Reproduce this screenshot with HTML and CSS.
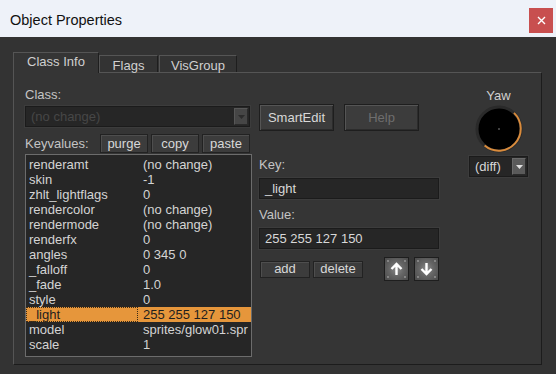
FILE: index.html
```html
<!DOCTYPE html>
<html lang="en">
<head>
    <meta charset="UTF-8">
    <title>Object Properties</title>
    <link rel="stylesheet" href="styles.css">
</head>
<body>
    <div class="titlebar">
        <span class="title">Object Properties</span>
        <button class="close">
            <svg width="9" height="9" viewBox="0 0 9 9"><path d="M1 1 L8 8 M8 1 L1 8" stroke="#fff" stroke-width="1.4"/></svg>
        </button>
    </div>

    <div class="client">
        <div class="tabs">
            <div class="tab active tab-class">Class Info</div>
            <div class="tab tab-flags">Flags</div>
            <div class="tab tab-vis">VisGroup</div>
        </div>

        <div class="panel">
            <!-- left: class + keyvalue list -->
            <div class="col-left">
                <div class="label first">Class:</div>
                <div class="combo combo-class">
                    <span class="combo-text">(no change)</span>
                    <span class="combo-btn">
                        <svg width="7" height="4" viewBox="0 0 7 4"><path d="M0 0 H7 L3.5 4 Z" fill="#2c2c2c"/></svg>
                    </span>
                </div>
                <div class="kv-bar">
                    <span class="label">Keyvalues:</span>
                    <button class="btn small">purge</button>
                    <button class="btn small">copy</button>
                    <button class="btn small">paste</button>
                </div>
                <div class="kv-list">
                    <div class="kv-row"><span class="k">renderamt</span><span class="v">(no change)</span></div>
                    <div class="kv-row"><span class="k">skin</span><span class="v">-1</span></div>
                    <div class="kv-row"><span class="k">zhlt_lightflags</span><span class="v">0</span></div>
                    <div class="kv-row"><span class="k">rendercolor</span><span class="v">(no change)</span></div>
                    <div class="kv-row"><span class="k">rendermode</span><span class="v">(no change)</span></div>
                    <div class="kv-row"><span class="k">renderfx</span><span class="v">0</span></div>
                    <div class="kv-row"><span class="k">angles</span><span class="v">0 345 0</span></div>
                    <div class="kv-row"><span class="k">_falloff</span><span class="v">0</span></div>
                    <div class="kv-row"><span class="k">_fade</span><span class="v">1.0</span></div>
                    <div class="kv-row"><span class="k">style</span><span class="v">0</span></div>
                    <div class="kv-row selected"><span class="k">_light</span><span class="v">255 255 127 150</span></div>
                    <div class="kv-row"><span class="k">model</span><span class="v">sprites/glow01.spr</span></div>
                    <div class="kv-row"><span class="k">scale</span><span class="v">1</span></div>
                </div>
            </div>

            <!-- middle: smartedit + key/value editing -->
            <div class="col-mid">
                <div class="top-buttons">
                    <button class="btn big">SmartEdit</button>
                    <button class="btn big" disabled>Help</button>
                </div>
                <div class="label key-label">Key:</div>
                <div class="field">_light</div>
                <div class="label value-label">Value:</div>
                <div class="field">255 255 127 150</div>
                <div class="edit-bar">
                    <button class="btn small wide">add</button>
                    <button class="btn small wide">delete</button>
                    <span class="spacer"></span>
                    <button class="arrow-btn">
                        <svg width="23" height="22" viewBox="0 0 23 22">
                            <circle cx="3" cy="3" r="0.9" fill="#9a9a9a"/><circle cx="20" cy="3" r="0.9" fill="#9a9a9a"/>
                            <circle cx="3" cy="19" r="0.9" fill="#9a9a9a"/><circle cx="20" cy="19" r="0.9" fill="#9a9a9a"/>
                            <path d="M11.5 17 V6 M6.5 11 L11.5 6 L16.5 11" fill="none" stroke="#fff" stroke-width="2.4"/>
                        </svg>
                    </button>
                    <button class="arrow-btn">
                        <svg width="23" height="22" viewBox="0 0 23 22">
                            <circle cx="3" cy="3" r="0.9" fill="#9a9a9a"/><circle cx="20" cy="3" r="0.9" fill="#9a9a9a"/>
                            <circle cx="3" cy="19" r="0.9" fill="#9a9a9a"/><circle cx="20" cy="19" r="0.9" fill="#9a9a9a"/>
                            <path d="M11.5 5 V16 M6.5 11 L11.5 16 L16.5 11" fill="none" stroke="#fff" stroke-width="2.4"/>
                        </svg>
                    </button>
                </div>
            </div>

            <!-- right: yaw dial -->
            <div class="col-right">
                <div class="label yaw-label">Yaw</div>
                <svg class="dial" width="48" height="48" viewBox="0 0 48 48">
                    <circle cx="24" cy="24" r="22" fill="#000" stroke="#2a2a2a" stroke-width="3"/>
                    <path d="M39 7.9 A22 22 0 0 1 9.6 40.6" fill="none" stroke="#d98b3c" stroke-width="2"/>
                    <rect x="23.5" y="23.5" width="1" height="1" fill="#fff"/>
                </svg>
                <div class="combo combo-diff">
                    <span class="combo-text">(diff)</span>
                    <span class="combo-btn">
                        <svg width="7" height="4" viewBox="0 0 7 4"><path d="M0 0 H7 L3.5 4 Z" fill="#e0e0e0"/></svg>
                    </span>
                </div>
            </div>
        </div>
    </div>
</body>
</html>
```

FILE: styles.css
```css
* {
    box-sizing: border-box;
}

body {
    margin: 0;
    width: 556px;
    height: 374px;
    overflow: hidden;
    background-color: #333333;
    font-family: "Liberation Sans", Arial, sans-serif;
    font-size: 13px;
    color: #cfcfcf;
}

button {
    font-family: inherit;
    font-size: 13px;
}

/* title bar */
.titlebar {
    height: 37px;
    background-color: #eef2f9;
    display: flex;
    align-items: center;
    justify-content: space-between;
    padding: 3px 3px 0 10px;
}

.title {
    font-size: 14.5px;
    color: #111;
}

.close {
    width: 24px;
    height: 25px;
    padding: 0;
    border: none;
    background-color: #c84f4f;
    display: flex;
    align-items: center;
    justify-content: center;
}

/* tabs */
.client {
    padding: 15px 0 0 13px;
}

.tabs {
    display: flex;
    align-items: flex-end;
    height: 21px;
    margin-bottom: -1px;
    position: relative;
    z-index: 1;
}

.tab {
    height: 17px;
    margin-bottom: 1px;
    padding-top: 3px;
    line-height: 14px;
    text-align: center;
    border: 1px solid;
    border-color: #555555 #1e1e1e transparent #555555;
    border-bottom: none;
    background-color: #333333;
    color: #d0d0d0;
}

.tab.active {
    height: 21px;
    margin-bottom: 0;
    padding-top: 2px;
    background-color: #353535;
}

.tab-class { width: 86px; }
.tab-flags { width: 59px; }
.tab-vis { width: 78px; margin-left: 1px; }

/* panel */
.panel {
    width: 529px;
    height: 293px;
    border: 1px solid;
    border-color: #555555 #1c1c1c #1c1c1c #555555;
    background-color: #353535;
    display: flex;
    padding-left: 11px;
}

.label {
    line-height: 15px;
    color: #c4c4c4;
}

.col-left {
    width: 227px;
    display: flex;
    flex-direction: column;
}

.label.first {
    margin-top: 14px;
}

.combo {
    height: 21px;
    display: flex;
    align-items: center;
    justify-content: space-between;
    background-color: #262626;
    border: 1px solid #1b1b1b;
    box-shadow: 0 0 0 1px #3c3c3c;
    padding: 0 1px 0 5px;
}

.combo-class {
    width: 225px;
    margin-top: 4px;
}

.combo-class .combo-text {
    color: #474747;
}

.combo-btn {
    width: 14px;
    height: 17px;
    display: flex;
    align-items: center;
    justify-content: center;
    background-color: #464646;
    border: 1px solid;
    border-color: #575757 #2a2a2a #2a2a2a #575757;
}

.kv-bar {
    margin-top: 7px;
    height: 19px;
    display: flex;
    align-items: center;
    gap: 3px;
}

.kv-bar .label {
    width: 72px;
}

.btn {
    background-color: #3c3c3c;
    color: #d8d8d8;
    border: 1px solid #222222;
    box-shadow: inset 1px 1px 0 #4e4e4e;
    padding: 0;
}

.btn:disabled {
    color: #6e6e6e;
}

.btn.small {
    width: 48px;
    height: 19px;
    line-height: 16px;
}

.kv-list {
    margin-top: 1px;
    height: 203px;
    border: 1px solid #6c6c6c;
    background-color: #262626;
    padding-top: 2px;
}

.kv-row {
    display: flex;
    height: 15px;
    line-height: 15px;
    color: #d4d4d4;
}

.kv-row .k {
    width: 112px;
    padding-left: 3px;
}

.kv-row .v {
    flex: 1;
    padding-left: 5px;
    white-space: nowrap;
}

.kv-row.selected {
    background-color: #e6963b;
    color: #1e1e1e;
}

.kv-row.selected .k {
    outline: 1px dotted #3a2a14;
    outline-offset: -1px;
}

/* middle column */
.col-mid {
    width: 180px;
    margin-left: 7px;
    display: flex;
    flex-direction: column;
}

.top-buttons {
    margin-top: 31px;
    display: flex;
    gap: 10px;
}

.btn.big {
    width: 75px;
    height: 27px;
    border: 1px solid #1e1e1e;
    box-shadow: inset 1px 1px 0 #555555, inset -1px -1px 0 #2c2c2c;
}

.key-label {
    margin-top: 26px;
}

.value-label {
    margin-top: 8px;
}

.field {
    margin-top: 6px;
    height: 21px;
    line-height: 19px;
    padding-left: 5px;
    background-color: #262626;
    border: 1px solid #1b1b1b;
    box-shadow: 0 0 0 1px #3c3c3c;
    color: #d8d8d8;
}

.edit-bar {
    margin-top: 8px;
    height: 24px;
    display: flex;
    align-items: center;
    gap: 3px;
    padding-left: 1px;
}

.btn.wide {
    width: 50px;
    height: 17px;
    line-height: 14px;
}

.spacer {
    flex: 1;
}

.arrow-btn {
    width: 25px;
    height: 24px;
    padding: 0;
    margin-left: 2px;
    border: 1px solid #1e1e1e;
    background: radial-gradient(circle at 50% 50%, #8a8a8a 0%, #666666 45%, #4a4a4a 100%);
    display: flex;
    align-items: center;
    justify-content: center;
}

/* right column */
.col-right {
    width: 59px;
    margin-left: 30px;
    display: flex;
    flex-direction: column;
    align-items: center;
}

.yaw-label {
    margin-top: 15px;
    color: #d0d0d0;
}

.dial {
    margin-top: 2px;
}

.combo-diff {
    width: 59px;
    margin-top: 3px;
    padding-left: 5px;
}

.combo-diff .combo-text {
    color: #d8d8d8;
}

.combo-diff .combo-btn {
    background-color: #5a5a5a;
    border-color: #6a6a6a #2a2a2a #2a2a2a #6a6a6a;
}
```
